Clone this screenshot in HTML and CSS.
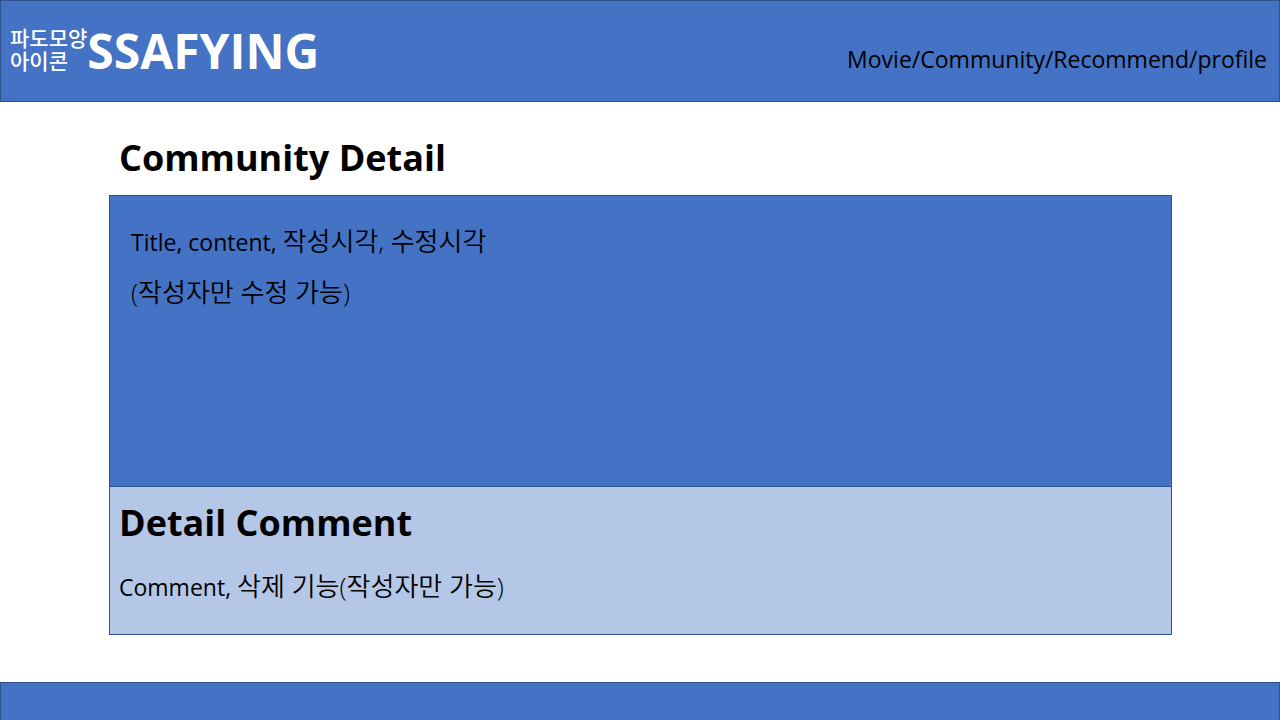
FILE: index.html
```html
<!DOCTYPE html>
<html lang="ko">
<head>
<meta charset="utf-8">
<meta name="viewport" content="width=device-width, initial-scale=1">
<title>SSAFYING</title>
<link rel="stylesheet" href="styles.css">
</head>
<body>
<header class="header">
  <div class="brand">
    <div class="brand-icon"><div>파도모양</div><div>아이콘</div></div>
    <div class="brand-name">SSAFYING</div>
  </div>
  <div class="menu">Movie/Community/Recommend/profile</div>
</header>
<main class="main">
  <h1 class="heading">Community Detail</h1>
  <article class="detail">
    <p class="text">Title, content, <span class="korean">작성시각, 수정시각</span></p>
    <p class="text"><span class="korean">(작성자만 수정 가능)</span></p>
  </article>
  <section class="comments">
    <h2 class="heading">Detail Comment</h2>
    <p class="text">Comment, <span class="korean">삭제 기능(작성자만 가능)</span></p>
  </section>
</main>
<footer class="footer"></footer>
</body>
</html>
```
FILE: styles.css
```css
* {
  box-sizing: border-box;
}

body {
  display: flex;
  flex-direction: column;
  min-height: 100vh;
  margin: 0;
  background: #fff;
  color: #000;
  font-family: "Open Sans", "Noto Sans CJK KR", sans-serif;
}

.header {
  display: flex;
  justify-content: space-between;
  align-items: center;
  min-height: 102px;
  padding: 0 12px 0 9px;
  background: #4472c4;
  border: 1px solid #2f528f;
}

.brand {
  display: flex;
  align-items: center;
  color: #fff;
  font-weight: 700;
}

.brand-icon {
  padding-bottom: 2px;
  font-size: 21px;
  font-weight: 500;
  line-height: 23px;
}

.brand-name {
  font-size: 48px;
  line-height: 64px;
}

.menu {
  padding-top: 16px;
  font-size: 23px;
  line-height: 32px;
}

.main {
  display: flex;
  flex: 1;
  flex-direction: column;
  padding: 32px 108px 47px 109px;
}

.heading {
  margin: 0;
  padding-left: 10px;
  font-size: 36px;
  font-weight: 700;
  line-height: 48px;
}

.text {
  margin: 0;
  font-size: 23px;
  line-height: 32px;
}

.korean {
  font-size: 26px;
  font-weight: 350;
}

.detail {
  display: flex;
  flex: 1;
  flex-direction: column;
  gap: 18px;
  margin-top: 13px;
  padding: 29px 21px;
  background: #4472c4;
  border: 1px solid #2f528f;
}

.comments {
  display: flex;
  flex-direction: column;
  gap: 23px;
  padding: 12px 9px 31px;
  background: #b4c7e7;
  border: 1px solid #2f528f;
  border-top: 0;
}

.comments .heading {
  padding-left: 0;
}

.footer {
  min-height: 38px;
  background: #4472c4;
  border: 1px solid #2f528f;
  border-bottom: 0;
}
```
